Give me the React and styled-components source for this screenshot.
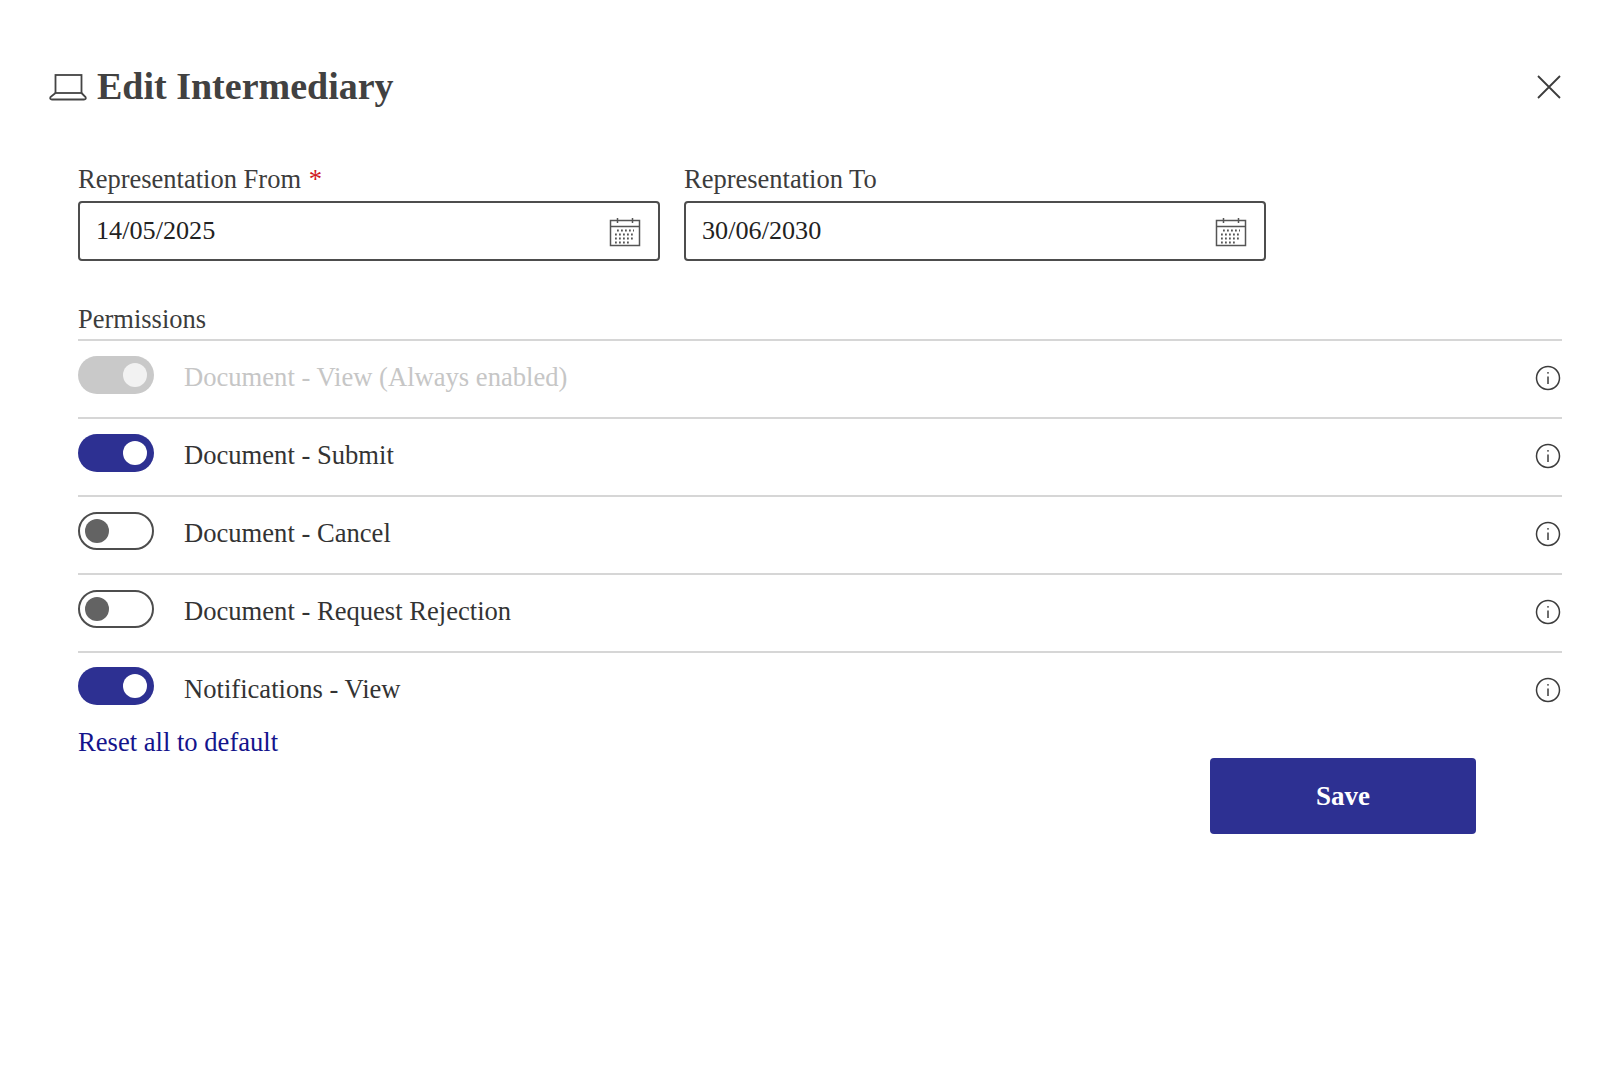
import React from 'react'
import styled, { createGlobalStyle } from 'styled-components'

const GlobalStyle = createGlobalStyle`
  html, body {
    margin: 0;
    background: #ffffff;
    font-family: "Liberation Serif", "Times New Roman", serif;
  }
`

const Page = styled.div`
  width: 1600px;
  height: 1065px;
  box-sizing: border-box;
  padding: 67px 38px 0 49px;
  overflow: hidden;
`

const Header = styled.div`
  display: flex;
  align-items: center;
  justify-content: space-between;
  height: 40px;
`

const TitleWrap = styled.div`
  display: flex;
  align-items: center;
  gap: 10px;
`

const Title = styled.h1`
  margin: -2px 0 0;
  font-size: 38px;
  line-height: 40px;
  font-weight: 700;
  color: #414141;
`

const Body = styled.div`
  padding: 51px 0 0 29px;
`

const DateRow = styled.div`
  display: flex;
  gap: 24px;
`

const DateField = styled.div`
  width: 582px;
`

const Label = styled.div`
  font-size: 26.5px;
  line-height: 43px;
  color: #3c3c3c;
`

const Star = styled.span`
  color: #d0191f;
  margin-left: 1px;
`

const DateBox = styled.div`
  box-sizing: border-box;
  height: 60px;
  display: flex;
  align-items: center;
  justify-content: space-between;
  padding: 0 17px 0 16px;
  border: 2px solid #4d4d4d;
  border-radius: 4px;
  font-size: 26.2px;
  color: #222222;
`

const CalendarSlot = styled.span`
  display: flex;
  margin-top: 2px;
`

const PermissionsLabel = styled(Label)`
  margin-top: 40px;
  height: 38px;
  line-height: 37px;
  border-bottom: 2px solid #d6d6d6;
`

const Row = styled.div`
  display: flex;
  align-items: center;
  gap: 30px;
  height: 72px;
  padding-bottom: ${({ $last }) => ($last ? '0' : '4px')};
  border-bottom: ${({ $last }) => ($last ? 'none' : '2px solid #d6d6d6')};
`

const Toggle = styled.div`
  box-sizing: border-box;
  flex: none;
  position: relative;
  width: 76px;
  height: 38px;
  margin-top: ${({ $last }) => ($last ? '-6px' : '-4px')};
  border-radius: 19px;
  border: ${({ $state }) => ($state === 'off' ? '2px solid #4d4d4d' : 'none')};
  background: ${({ $state }) =>
    $state === 'on' ? '#2d3092' : $state === 'disabled' ? '#c9c9c9' : '#ffffff'};
`

const Knob = styled.span`
  position: absolute;
  top: ${({ $state }) => ($state === 'off' ? '5px' : '7px')};
  width: 24px;
  height: 24px;
  border-radius: 50%;
  left: ${({ $state }) => ($state === 'off' ? '5px' : '45px')};
  background: ${({ $state }) =>
    $state === 'on' ? '#ffffff' : $state === 'disabled' ? '#f2f2f2' : '#636363'};
`

const RowText = styled.span`
  flex: 1;
  font-size: 26.6px;
  color: ${({ $disabled }) => ($disabled ? '#c6c6c6' : '#333333')};
`

const InfoSlot = styled.span`
  display: flex;
  flex: none;
  margin: 1px 1px 0 0;
`

const ResetLink = styled.a`
  display: block;
  margin-top: -1px;
  font-size: 26.6px;
  line-height: 36px;
  color: #14148c;
  cursor: pointer;
`

const Footer = styled.div`
  display: flex;
  justify-content: flex-end;
  padding-right: 86px;
`

const SaveButton = styled.button`
  width: 266px;
  height: 76px;
  margin-top: -2px;
  border: none;
  border-radius: 4px;
  background: #2d3092;
  color: #ffffff;
  font-family: inherit;
  font-size: 27px;
  font-weight: 700;
`

const LaptopIcon = () => (
  <svg width="38" height="28" viewBox="0 0 38 28" fill="none" stroke="#444" strokeWidth="1.8">
    <rect x="6.500" y="2" width="26" height="18" />
    <path d="M6.500 20 L1.500 24 Q0.500 26.500 3 26.500 H35 Q37.500 26.500 36.500 24 L32.500 20" />
  </svg>
)

const CloseIcon = () => (
  <svg width="26" height="26" viewBox="0 0 26 26" stroke="#3c3c3c" strokeWidth="1.800">
    <path d="M2 2 L24 24 M24 2 L2 24" />
  </svg>
)

const CalendarIcon = () => (
  <svg width="32" height="30" viewBox="0 0 32 30" fill="none" stroke="#555">
    <rect x="1.500" y="3.500" width="29" height="25" strokeWidth="1.500" />
    <path d="M1.500 9.500 H30.500 M8.500 1 V6 M23.500 1 V6" strokeWidth="1.500" />
    <path
      d="M8 13.500 H25 M6 17.500 H25 M6 21.500 H25 M6 25.500 H20"
      strokeWidth="1.800"
      strokeDasharray="1.800 2.200"
    />
  </svg>
)

const InfoIcon = () => (
  <svg width="26" height="26" viewBox="0 0 26 26" fill="none" stroke="#3c3c3c">
    <circle cx="13" cy="13" r="11.500" strokeWidth="1.500" />
    <path d="M13 11.500 V19" strokeWidth="1.500" />
    <circle cx="13" cy="7.800" r="0.900" fill="#3c3c3c" stroke="none" />
  </svg>
)

const permissions = [
  { text: 'Document - View (Always enabled)', state: 'disabled' },
  { text: 'Document - Submit', state: 'on' },
  { text: 'Document - Cancel', state: 'off' },
  { text: 'Document - Request Rejection', state: 'off' },
  { text: 'Notifications - View', state: 'on' },
]

const App = () => (
  <Page>
    <GlobalStyle />
    <Header>
      <TitleWrap>
        <LaptopIcon />
        <Title>Edit Intermediary</Title>
      </TitleWrap>
      <CloseIcon />
    </Header>
    <Body>
      <DateRow>
        <DateField>
          <Label>Representation From <Star>*</Star></Label>
          <DateBox>14/05/2025<CalendarSlot><CalendarIcon /></CalendarSlot></DateBox>
        </DateField>
        <DateField>
          <Label>Representation To</Label>
          <DateBox>30/06/2030<CalendarSlot><CalendarIcon /></CalendarSlot></DateBox>
        </DateField>
      </DateRow>
      <PermissionsLabel>Permissions</PermissionsLabel>
      {permissions.map((p, i) => {
        const last = i === permissions.length - 1
        return (
          <Row key={p.text} $last={last}>
            <Toggle $state={p.state} $last={last}><Knob $state={p.state} /></Toggle>
            <RowText $disabled={p.state === 'disabled'}>{p.text}</RowText>
            <InfoSlot><InfoIcon /></InfoSlot>
          </Row>
        )
      })}
      <ResetLink>Reset all to default</ResetLink>
      <Footer>
        <SaveButton>Save</SaveButton>
      </Footer>
    </Body>
  </Page>
)

export default App
